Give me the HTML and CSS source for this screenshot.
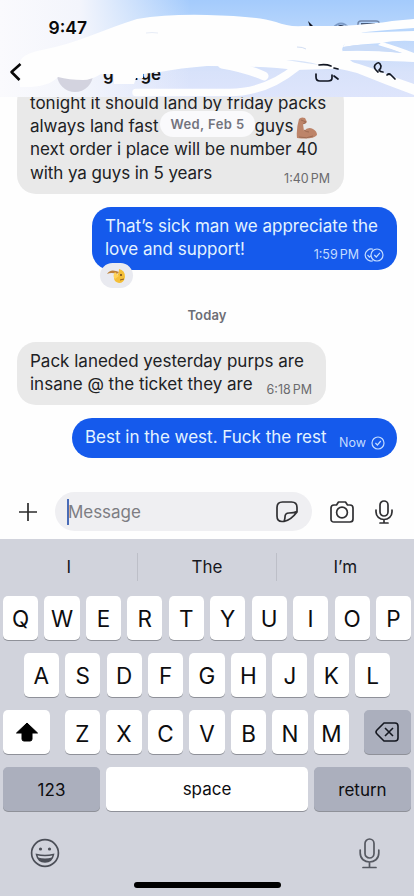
FILE: index.html
```html
<!DOCTYPE html>
<html lang="en">
<head>
<meta charset="utf-8">
<meta name="viewport" content="width=device-width, initial-scale=1">
<title>Messages</title>
<link rel="stylesheet" href="styles.css">
</head>
<body>
<main class="phone">
  <header class="top">
    <div class="status"><span class="clock">9:47</span>
      <svg class="status-icons" width="84" height="14" viewBox="0 0 84 14"><path d="M7 1l8 8-6-2Z" fill="#10131f"/><path d="M32 8q8-9 16 0" fill="none" stroke="#7b9ac6" stroke-width="1.800"/><path d="M37 7q3-2 6 0" stroke="#26334e" fill="none" stroke-width="2"/><path d="M57 6V4q0-3 3-3h15q3 0 3 2" fill="none" stroke="#7187aa" stroke-width="1.500"/><path d="M60 4h14" stroke="#26334e" stroke-width="1.500"/></svg>
    </div>
    <div class="nav">
      <span class="avatar"></span><span class="name">george</span>
    </div>
    <svg class="scribble" width="414" height="97" viewBox="0 0 414 97">
      <g fill="#fefefe">
        <path d="M20 62Q22 54 42 50C79 43 106 28 137 19Q168 14 207 15C236 16 260 17 276 22Q288 27 303 26H345L365 31Q345 40 343 47Q341 50 344 53L420 62V62L350 60 360 68 296 70Q265 66 207 66Q180 68 160 72L143 74V78H136L134 84H114V74H101Q91 80 83 80Q69 80 58 77Q48 88 20 87Z"/>
        <path d="M340 26Q375 24 392 21L414 19V28Q385 30 366 32L340 36Z"/>
        <path d="M350 33L414 31V41Q394 40 382 43Q360 44 343 47Z"/>
        <path d="M382 42Q396 46 414 53V62Q384 58 350 60L335 57 343 51Q370 50 402 53Q389 48 378 45Z"/>
        <path d="M325 57Q350 60 371 68Q393 77 414 84V95Q384 84 357 73Q337 67 318 67Z"/>
      </g>
      <g fill="none" stroke="#fefefe" stroke-linecap="round">
        <path d="M136 92.500H225Q264 94 297 67" stroke-width="7.500"/>
        <path d="M222 64Q246 68 264 76" stroke-width="9"/>
      </g>
      <path d="M344 47Q357 44 372 45Q388 48 402 53Q366 49 344 51Z" fill="#cbdcf7"/>
      <path d="M286 60Q303 60 320 65Q304 63 286 60Z" fill="#d8e4f9"/>
      <path d="M297 47q6 0 9 2" fill="none" stroke="#d2def3"/>
      <path d="M146 33q6-1 12 0" fill="none" stroke="#e8edf7"/>
      <g fill="none" stroke="#111622" stroke-width="1.700" stroke-linecap="round" stroke-linejoin="round">
        <path d="M319 65q7-1 12 1M334 68l4 1"/>
        <path d="M316 74v3q0 4 4 4h8q4 0 4-3v-3M334 76l4 3"/>
        <path d="M378 72Q373 68 375 65Q379 60 381 66Q381 69 379 70Q380 72 383 72M387 75Q389 73 391 75L395 79"/>
      </g>
    </svg>
    <svg class="back" width="13" height="20" viewBox="0 0 13 20"><path d="M11.500 2L2.500 10l8 8" fill="none" stroke="#070707" stroke-width="2.600" stroke-linejoin="round"/></svg>
  </header>

  <section class="thread">
    <div class="date-pill">Wed, Feb 5</div>
    <article class="bubble in first"><p class="text">tonight it should land by friday packs<br><span class="tight">always land fast</span><span class="gap"></span><span>guys</span><svg class="arm" width="22" height="23" viewBox="0 0 22 23"><path d="M3 2Q5-.5 9 1L11 5 9 7 7 7 8 14Q12 9 17 12Q21 14 21 18Q17 23 1 21Q0 12 3 2Z" fill="#bd8469"/><path d="M5 3l5 2-3 2M8 13q2 2 5 2M3 20q8 2 14-1" fill="none" stroke="#9d6b53"/></svg><br><span class="tight">next order i place will be number 40</span><br><span class="tighter">with ya guys in 5 years</span></p><span class="meta">1:40 PM</span></article>
    <article class="bubble out second"><p class="text">That’s sick man we appreciate the<br>love and support!</p>
      <span class="meta">1:59 PM <svg width="20" height="14" viewBox="0 0 20 14" fill="none" stroke="currentColor" stroke-width="1.200"><circle cx="13" cy="7" r="6"/><path d="M9 1.300A6 6 0 1 0 9 12.700M10.300 7l2 2 3.600-4.200M3.500 7l2 2.200 1.500-1.500"/></svg></span>
      <span class="reaction"><svg width="21" height="16" viewBox="0 0 21 16"><path d="M13 1q6 1 6 8-1 6-6 6-5-1-5-5 5-2 5-9Z" fill="#f4bf38"/><path d="M1 6q3-5 9-3l3 1-2 2Q5 4 1 6Z" fill="#bd8038"/><path d="M9 4l4 4-4 3Q6 8 9 4Z" fill="#ffd35a"/><circle cx="15" cy="7" r="1" fill="#674322"/><path d="M14 12l4-1" stroke="#8a5b25"/></svg></span>
    </article>
    <div class="today">Today</div>
    <article class="bubble in third"><p class="text">Pack laneded yesterday purps are<br>insane @ the ticket they are</p><span class="meta">6:18 PM</span></article>
    <article class="bubble out fourth"><p class="text">Best in the west. Fuck the rest</p><span class="meta">Now <svg width="14" height="14" viewBox="0 0 14 14" fill="none" stroke="currentColor" stroke-width="1.200"><circle cx="7" cy="7" r="6"/><path d="M4.400 7l2 2 3.400-4"/></svg></span></article>
  </section>

  <section class="composer">
    <svg class="plus" width="18" height="18" viewBox="0 0 18 18"><path d="M9 0v18M0 9h18" stroke="#2c2c2c" stroke-width="1.700"/></svg>
    <div class="field"><i class="caret"></i><span>Message</span>
      <svg width="22" height="22" viewBox="0 0 22 22" fill="none" stroke="#303033" stroke-width="1.700" stroke-linejoin="round"><path d="M8 20.500H6Q1 20.500 1 15V6.500Q1 1 6.500 1h9Q21 1 21 6.500V11Q15 19 8 20.500Q9 18 9 16Q9 12 13 12q5 0 8-1.500"/></svg></div>
    <svg class="camera" width="24" height="22" viewBox="0 0 24 22" fill="none" stroke="#303033" stroke-width="1.700" stroke-linejoin="round"><path d="M4 4h2.500L8.500 1h7l2 3H20q3 0 3 3v11q0 3-3 3H4q-3 0-3-3V7q0-3 3-3Z"/><circle cx="12" cy="11.500" r="5.400"/></svg>
    <svg class="mic" width="18" height="24" viewBox="0 0 18 24" fill="none" stroke="#303033" stroke-width="1.700" stroke-linecap="round"><rect x="5" y="1" width="8" height="15" rx="4"/><path d="M1 10v2a8 7.500 0 0 0 16 0v-2M9 19.500V23M5 23h8"/></svg>
  </section>

  <section class="keyboard">
    <div class="suggest"><span>I</span><span>The</span><span>I’m</span></div>
    <div class="row"><b>Q</b><b>W</b><b>E</b><b>R</b><b>T</b><b>Y</b><b>U</b><b>I</b><b>O</b><b>P</b></div>
    <div class="row middle"><b>A</b><b>S</b><b>D</b><b>F</b><b>G</b><b>H</b><b>J</b><b>K</b><b>L</b></div>
    <div class="row lower"><b class="shift"><svg width="24" height="20" viewBox="0 0 24 20"><path d="M12 1L22.500 11H17v6q0 2-2 2H9q-2 0-2-2v-6H1.500Z" fill="#000" stroke="#000" stroke-linejoin="round"/></svg></b><b>Z</b><b>X</b><b>C</b><b>V</b><b>B</b><b>N</b><b>M</b><b class="delete"><svg width="24" height="20" viewBox="0 0 24 20" fill="none" stroke="#151820" stroke-width="1.600" stroke-linejoin="round"><path d="M9 1h11q3 0 3 3v12q0 3-3 3H9L2 12q-2-2 0-4Z"/><path d="M10 6l8 8M18 6l-8 8"/></svg></b></div>
    <div class="row bottom"><b class="gray num">123</b><b class="space">space</b><b class="gray ret">return</b></div>
    <div class="tools">
      <svg width="30" height="30" viewBox="0 0 30 30" fill="none" stroke="#4b4e57" stroke-width="1.700"><circle cx="15" cy="15" r="13.400"/><circle cx="10.500" cy="11" r="1.600" fill="#4b4e57" stroke="none"/><circle cx="19.500" cy="11" r="1.600" fill="#4b4e57" stroke="none"/><path d="M6.500 16.500q8.500 2 17 0Q22 24 15 24T6.500 16.500Z" stroke-width="1.400"/><path d="M8 19.500q7 2 14 0Q20 24 15 24T8 19.500Z" fill="#4b4e57" stroke="none"/></svg>
      <svg width="21" height="31" viewBox="0 0 21 31" fill="none" stroke="#555861" stroke-width="1.700" stroke-linecap="round"><rect x="6" y="1" width="9" height="19" rx="4.500"/><path d="M1.200 12v3c0 12 18.600 12 18.600 0v-3M10.500 24v5.500M4 29.500h13"/></svg>
    </div>
    <div class="home"></div>
  </section>
</main>
</body>
</html>
```

FILE: styles.css
```css
* { box-sizing: border-box; }
body { margin: 0; background: #fefefe; font-family: Inter, "Liberation Sans", sans-serif; color: #202124; }
svg { display: block; flex: none; }
.phone { width: 414px; height: 896px; overflow: hidden; display: flex; flex-direction: column; }
.top { position: relative; z-index: 2; flex: none; height: 97px; background: linear-gradient(90deg, #fafafd 0, #f3f5fc 80px, rgba(243,245,252,0) 190px), linear-gradient(180deg, #a4cbfc 0, #b8d6fc 30px, #d8e2fa 72px, #dee5fc 97px); }
.status { height: 57px; display: flex; justify-content: space-between; padding: 17px 29px 0 48.500px; color: #090909; }
.clock { font-size: 17.500px; line-height: 22px; font-weight: 600; }
.status-icons { margin-top: 3px; }
.nav { display: flex; padding-left: 57px; height: 40px; }
.avatar { width: 36px; height: 36px; border-radius: 50%; background: #d3d3df; margin-top: -1px; flex: none; }
.name { font-size: 17px; font-weight: 600; line-height: 22px; margin: 6px 0 0 10px; color: #111; }
.scribble { position: absolute; left: 0; top: 0; }
.back { position: absolute; left: 9px; top: 62px; }
.thread { position: relative; display: flex; flex-direction: column; margin-top: -15px; height: 410px; flex: none; }
.bubble { position: relative; border-radius: 19px; padding: 8px 13px; flex: none; }
.in { background: #e9e9e9; align-self: flex-start; margin-left: 17px; }
.out { background: #155aec; color: #e3f3ff; align-self: flex-end; margin-right: 17px; }
.text { margin: 0; font-size: 17px; line-height: 23.400px; white-space: nowrap; }
.tight { letter-spacing: -.04px; }
.tighter { letter-spacing: -.09px; }
.meta { position: absolute; right: 14px; bottom: 7px; display: flex; gap: 5px; align-items: center; font-size: 12.500px; line-height: 16px; color: #6b6b6e; white-space: nowrap; word-spacing: -1.500px; }
.out .meta { color: #c3dcff; right: 13px; }
.first { width: 327px; height: 112px; padding-top: 9.500px; }
.second { width: 305px; height: 63px; margin-top: 13px; }
.third { width: 309px; height: 63px; margin-top: 17px; }
.fourth { width: 325px; height: 40px; margin-top: 13px; border-radius: 20px; }
.fourth .meta { bottom: 7.500px; }
.out.fourth .meta { right: 12px; }
.today { height: 20px; margin-top: 35px; font-size: 13px; font-weight: 600; line-height: 20px; color: #6d6e76; text-align: center; letter-spacing: .15px; }
.date-pill { position: absolute; z-index: 1; left: 160px; top: 29px; width: 95px; height: 26px; border-radius: 13px; background: #fafafc; text-align: center; font-size: 13px; line-height: 26px; font-weight: 600; letter-spacing: .4px; color: #73747e; }
.gap { display: inline-block; width: 96px; }
.arm { display: inline-block; vertical-align: -3px; margin: -5px 0 -5px 2px; }
.reaction { position: absolute; left: 8px; bottom: -18px; width: 33px; height: 25px; border-radius: 13px; background: #e9eaf0; display: flex; align-items: center; justify-content: center; }
.composer { height: 47px; flex: none; display: flex; align-items: center; padding: 0 20px 8px 19px; }
.field { height: 39px; width: 257px; margin-left: 18px; background: #efeff2; border-radius: 20px; display: flex; align-items: center; padding: 0 14px 0 12px; color: #7d7d83; font-size: 17px; }
.field span { flex: 1; letter-spacing: -.05px; }
.caret { width: 2px; height: 26px; background: #4a6cb7; margin-right: -1px; }
.camera { margin-left: 18px; }
.mic { margin-left: 21px; }
.keyboard { flex: 1; background: #d1d3dc; display: flex; flex-direction: column; }
.suggest { height: 56.500px; display: flex; align-items: center; flex: none; font-size: 17px; color: #17181c; }
.suggest span { flex: 1; height: 28px; line-height: 29px; text-align: center; }
.suggest span + span { border-left: 1px solid #bdbfc8; }
.row { height: 44px; margin: 0 3px 13.300px; flex: none; display: flex; gap: 6.350px; }
.row b { flex: 1 1 0; background: #fff; border-radius: 5px; box-shadow: 0 1px 0 #8f9199; font-size: 22.500px; font-weight: 400; color: #0d0d0f; display: flex; align-items: center; justify-content: center; padding-top: 2px; }
.middle { margin-left: 23.700px; margin-right: 23.700px; }
.row .shift { flex: 0 0 47px; margin-right: 8.500px; padding: 0; }
.row .delete { flex: 0 0 47px; margin-left: 8.500px; padding: 0; background: #abafbd; }
.row .gray { flex: 0 0 97px; background: #abafbd; font-size: 17px; }
.row .space { font-size: 17px; padding: 0; }
.tools { display: flex; justify-content: space-between; height: 31px; margin: 13.500px 34px 0 30px; }
.home { width: 147px; height: 6px; border-radius: 3px; background: #000; margin: 13px auto 0; flex: none; }
```
